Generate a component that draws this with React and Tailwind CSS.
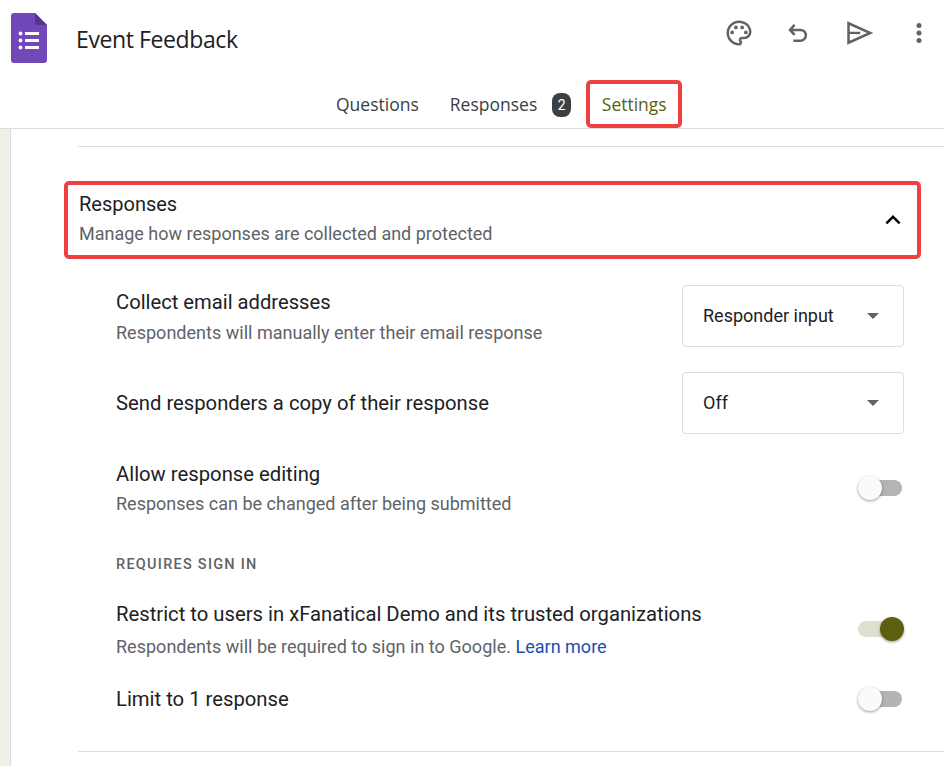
import React from "react";

function Toggle({ on, className = "" }) {
  return (
    <div className={`relative w-[44px] h-[16px] mr-[2px] ${className}`}>
      <div className={`w-[44px] h-[16px] rounded-full ${on ? "bg-[#dddfd0]" : "bg-[#b4b4b4]"}`} />
      <div
        className={`absolute top-[-4px] w-[24px] h-[24px] rounded-full shadow-[0_1px_3px_rgba(0,0,0,0.4)] ${on ? "left-[22px] bg-[#5b5f0f]" : "left-0 bg-[#fafafa]"}`}
      />
    </div>
  );
}

function Select({ label }) {
  return (
    <div className="w-[222px] h-[62px] border border-[#dadce0] rounded-[4px] flex items-center justify-between pl-[20px] pr-[24px] text-[18px] text-[#202124] shrink-0">
      <span className="pb-[2px]">{label}</span>
      <div className="w-0 h-0 border-x-[6px] border-x-transparent border-t-[6px] border-t-[#5f6368]" />
    </div>
  );
}

export default function App() {
  return (
    <div className="w-[944px] h-[766px] overflow-hidden bg-white flex flex-col font-['Roboto',sans-serif]">
      {/* Header */}
      <header className="h-[129px] shrink-0 border-b border-[#dadce0] flex flex-col">
        <div className="h-[79px] flex items-start">
          <svg className="ml-[11px] mt-[13px] shrink-0" width="36" height="50" viewBox="0 0 36 50">
            <path d="M3 0H24L36 12V47a3 3 0 0 1-3 3H3a3 3 0 0 1-3-3V3a3 3 0 0 1 3-3Z" fill="#7248b9" />
            <path d="M24 0L36 12H24Z" fill="#56348f" />
            <circle cx="9.5" cy="20.5" r="1.9" fill="#fff" />
            <circle cx="9.5" cy="27.5" r="1.9" fill="#fff" />
            <circle cx="9.5" cy="34.5" r="1.9" fill="#fff" />
            <rect x="14" y="19" width="14" height="3" fill="#fff" />
            <rect x="14" y="26" width="14" height="3" fill="#fff" />
            <rect x="14" y="33" width="14" height="3" fill="#fff" />
          </svg>
          <h1 className="ml-[29px] mt-[25px] text-[23px] leading-[29px] text-[#202124] font-['Open_Sans',sans-serif] tracking-[-0.4px]">Event Feedback</h1>
          <div className="ml-auto mt-[18px] mr-[10px] flex items-center gap-[30px] text-[#5f6368]">
            <svg width="30" height="30" viewBox="0 0 24 24" fill="currentColor">
              <path d="M12 2C6.49 2 2 6.49 2 12s4.49 10 10 10c1.38 0 2.5-1.12 2.5-2.5 0-.61-.23-1.2-.64-1.67-.08-.1-.13-.21-.13-.33 0-.28.22-.5.5-.5H16c3.31 0 6-2.69 6-6 0-4.96-4.49-9-10-9Zm4 13h-1.77c-1.38 0-2.5 1.12-2.5 2.5 0 .61.22 1.19.63 1.65.06.07.14.19.14.35 0 .28-.22.5-.5.5-4.41 0-8-3.59-8-8s3.59-8 8-8 8 3.14 8 7c0 2.21-1.79 4-4 4Z" />
              <circle cx="6.5" cy="11.5" r="1.5" />
              <circle cx="9.5" cy="7.5" r="1.5" />
              <circle cx="14.5" cy="7.5" r="1.5" />
              <circle cx="17.5" cy="11.5" r="1.5" />
            </svg>
            <svg width="30" height="30" viewBox="0 0 24 24" fill="none" stroke="currentColor" strokeWidth="2">
              <path d="M8.5 5.5 4.8 9.5l3.7 4M5 9.5h8.2a4.3 4.3 0 0 1 0 8.6H7.5" />
            </svg>
            <svg width="30" height="30" viewBox="0 0 24 24" fill="none" stroke="currentColor" strokeWidth="2">
              <path d="M3.6 4.2V19.8L21 12Z M3.6 11.7 13 12" />
            </svg>
            <svg width="30" height="30" viewBox="0 0 24 24" fill="currentColor">
              <circle cx="12" cy="6" r="2" />
              <circle cx="12" cy="12" r="2" />
              <circle cx="12" cy="18" r="2" />
            </svg>
          </div>
        </div>
        <nav className="flex items-start pl-[336px] font-['Open_Sans',sans-serif] font-medium text-[17.5px] text-[#3c4043]">
          <span className="mt-[13px] leading-[24px]">Questions</span>
          <span className="ml-[31px] mt-[13px] leading-[24px]">Responses</span>
          <span className="ml-[15px] mt-[14px] w-[19px] h-[24px] rounded-[8px] bg-[#3c4043] text-white text-[14px] font-normal flex items-center justify-center font-['Roboto',sans-serif]">2</span>
          <div className="ml-[15px] mt-[1px] w-[96px] h-[48px] border-[4px] border-[#ef4040] rounded-[5px] flex items-center justify-center text-[#5b5f0f]">Settings</div>
        </nav>
      </header>

      {/* Body */}
      <div className="flex-1 flex min-h-0">
        <div className="w-[11px] shrink-0 bg-[#f0f0e8] border-r border-[#dadce0]" />
        <main className="flex-1 pl-[54px] pr-[23px] min-w-0">
          <div className="ml-[13px] -mr-[23px] mt-[17px] border-t border-[#dadce0]" />

          <div className="mt-[34px] -ml-[1px] h-[78px] border-[4px] border-[#ef4040] rounded-[5px] pl-[11px] pr-[12px] flex items-center justify-between">
            <div className="pb-[4px]">
              <div className="text-[20px] leading-[26px] text-[#202124]">Responses</div>
              <div className="mt-[6px] text-[18px] leading-[22px] text-[#5f6368]">Manage how responses are collected and protected</div>
            </div>
            <svg className="-mr-[3px]" width="30" height="30" viewBox="0 0 24 24" fill="#000">
              <path d="M7.41 15.41 12 10.83l4.59 4.58L18 14l-6-6-6 6Z" />
            </svg>
          </div>

          <div className="ml-[51px] mr-[17px]">
            <div className="mt-[26px] h-[62px] flex items-center justify-between">
              <div>
                <div className="text-[20.2px] leading-[26px] text-[#202124]">Collect email addresses</div>
                <div className="mt-[7px] text-[18.04px] leading-[22px] text-[#5f6368]">Respondents will manually enter their email response</div>
              </div>
              <Select label="Responder input" />
            </div>
            <div className="mt-[25px] h-[62px] flex items-center justify-between">
              <div className="text-[20.25px] leading-[26px] text-[#202124]">Send responders a copy of their response</div>
              <Select label="Off" />
            </div>
            <div className="mt-[27px] flex items-center justify-between">
              <div>
                <div className="text-[20.25px] leading-[26px] text-[#202124]">Allow response editing</div>
                <div className="mt-[6px] text-[18px] leading-[22px] text-[#5f6368]">Responses can be changed after being submitted</div>
              </div>
              <Toggle />
            </div>
            <div className="mt-[41px] text-[14.5px] leading-[18px] font-medium tracking-[1.25px] text-[#5f6368]">REQUIRES SIGN IN</div>
            <div className="mt-[27px] flex items-center justify-between">
              <div>
                <div className="text-[20.25px] leading-[26px] text-[#202124]">Restrict to users in xFanatical Demo and its trusted organizations</div>
                <div className="mt-[9px] text-[18.04px] leading-[22px] text-[#5f6368]">
                  Respondents will be required to sign in to Google. <span className="text-[#1a4fb0]">Learn more</span>
                </div>
              </div>
              <Toggle on className="mb-[1px]" />
            </div>
            <div className="mt-[28px] flex items-center justify-between">
              <div className="text-[20.25px] leading-[26px] text-[#202124]">Limit to 1 response</div>
              <Toggle />
            </div>
          </div>

          <div className="ml-[13px] -mr-[23px] mt-[39px] border-t border-[#dadce0]" />
        </main>
      </div>
    </div>
  );
}
